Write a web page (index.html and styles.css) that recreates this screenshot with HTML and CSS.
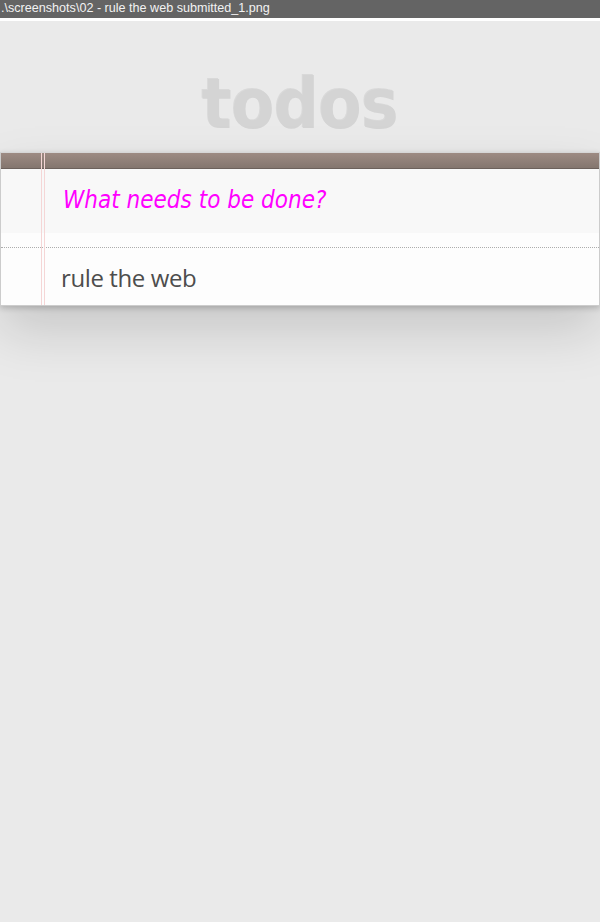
FILE: index.html
```html
<!DOCTYPE html>
<html>
<head>
<meta charset="utf-8">
<title>todos</title>
<link rel="stylesheet" href="styles.css">
</head>
<body>
<div class="titlebar">.\screenshots\02 - rule the web submitted_1.png</div>
<div class="titlegap"></div>
<div class="page">
  <div class="hero"><h1 class="logo">todos</h1></div>
  <section class="app">
    <div class="app-head"></div>
    <div class="new-wrap">
      <div class="new-todo">What needs to be done?</div>
    </div>
    <ul class="todo-list">
      <li class="todo-item"><span class="todo-label">rule the web</span></li>
    </ul>
  </section>
</div>
</body>
</html>
```
FILE: styles.css
```css
* { box-sizing: border-box; }
html, body { margin: 0; padding: 0; }
body {
  width: 600px;
  height: 922px;
  background: #eaeaea;
  overflow: hidden;
  font-family: "Open Sans", sans-serif;
  color: #4d4d4d;
}
.titlebar {
  height: 18px;
  background: #646464;
  color: #f2f2f2;
  font-family: "Liberation Sans", Arial, sans-serif;
  font-size: 12.6px;
  line-height: 17px;
  padding-left: 1px;
  white-space: nowrap;
}
.titlegap { height: 3px; background: #fff; }
.page { background: #eaeaea; height: 901px; }
.hero { height: 131px; padding-top: 48px; }
.logo {
  margin: 0;
  text-align: center;
  font-family: "DejaVu Sans Condensed", "DejaVu Sans", sans-serif;
  font-stretch: semi-condensed;
  font-weight: bold;
  font-size: 70px;
  line-height: 70px;
  color: #d4d4d4;
  text-shadow: -1px -1px 0 rgba(0, 0, 0, 0.07);
  letter-spacing: -0.5px;
}
.app {
  position: relative;
  width: 600px;
  border: 1px solid #ccc;
  border-top-color: #d6d6d6;
  background: #fdfdfd;
  box-shadow: 0 2px 6px 0 rgba(0, 0, 0, 0.2), 0 25px 50px 0 rgba(0, 0, 0, 0.15);
}
.app::before {
  content: "";
  position: absolute;
  top: 0;
  bottom: 0;
  left: 40px;
  width: 2px;
  box-sizing: content-box;
  border-left: 1px solid #f5d6d6;
  border-right: 1px solid #f5d6d6;
  z-index: 3;
}
.app-head {
  height: 16px;
  border-bottom: 1px solid #6c615c;
  background: linear-gradient(#9d8b83, #84766f);
}
.new-wrap {
  height: 79px;
  background: #fdfdfd;
  border-bottom: 1px dotted #adadad;
}
.new-todo {
  height: 64px;
  background: #f8f8f8;
  padding-left: 62px;
  font-family: "DejaVu Sans Condensed", "DejaVu Sans", sans-serif;
  font-stretch: semi-condensed;
  font-style: italic;
  font-size: 24px;
  line-height: 62px;
  color: #ff00ff;
}
.todo-list { list-style: none; margin: 0; padding: 0; }
.todo-item { height: 57px; }
.todo-label {
  display: block;
  padding-left: 60px;
  font-size: 24px;
  letter-spacing: -0.4px;
  line-height: 60px;
  color: #4d4d4d;
}
```
